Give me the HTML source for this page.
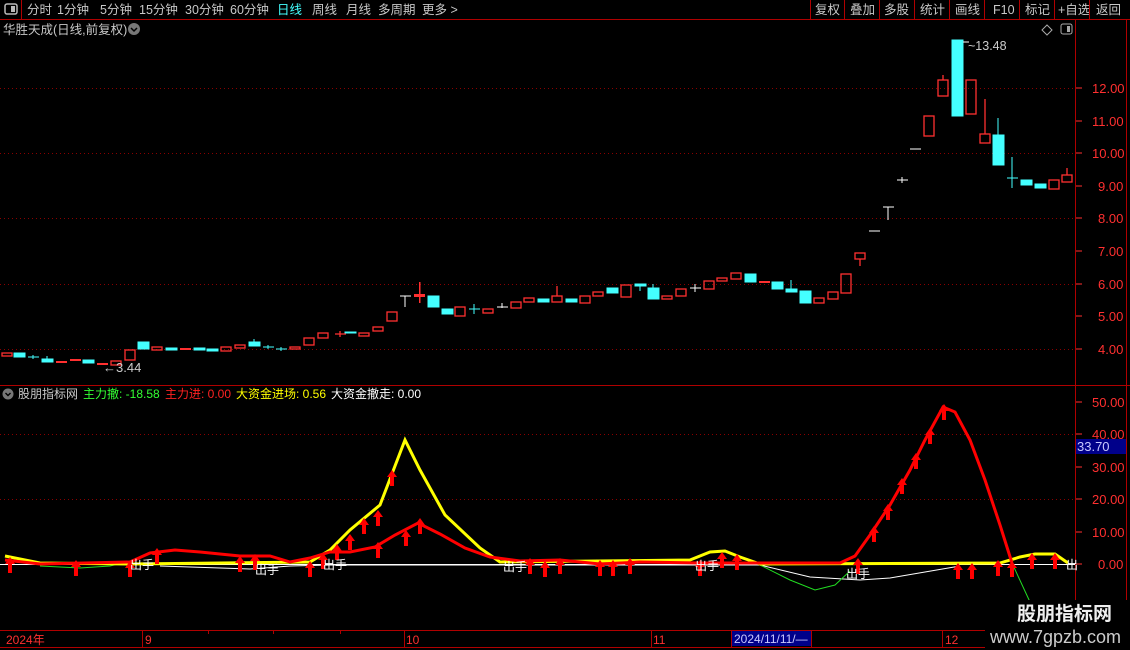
<!DOCTYPE html>
<html><head><meta charset="utf-8"><style>
body{margin:0;background:#000;width:1130px;height:650px;overflow:hidden}
svg{display:block}
text{font-family:"Liberation Sans","Noto Sans CJK SC",sans-serif}
</style></head><body>
<svg width="1130" height="650" viewBox="0 0 1130 650" xmlns="http://www.w3.org/2000/svg">
<rect width="1130" height="650" fill="#000"/>
<!-- toolbar -->
<line x1="0" y1="19.5" x2="1130" y2="19.5" stroke="#b00000"/>
<line x1="21.5" y1="0" x2="21.5" y2="19" stroke="#b00000"/>
<rect x="5" y="4" width="12" height="10" rx="2" fill="none" stroke="#bbb" stroke-width="1.5"/><rect x="11" y="6" width="4" height="6" fill="#bbb"/>
<g font-size="12.5" fill="#c8c8c8">
<text x="27" y="14">分时</text><text x="57" y="14">1分钟</text><text x="100" y="14">5分钟</text><text x="139" y="14">15分钟</text><text x="185" y="14">30分钟</text><text x="230" y="14">60分钟</text>
<text x="277" y="14" fill="#4ff">日线</text><text x="312" y="14">周线</text><text x="346" y="14">月线</text><text x="378" y="14">多周期</text><text x="422" y="14">更多 &gt;</text>
<text x="815" y="14">复权</text><text x="850" y="14">叠加</text><text x="884" y="14">多股</text><text x="920" y="14">统计</text><text x="955" y="14">画线</text><text x="993" y="14">F10</text><text x="1025" y="14">标记</text><text x="1058" y="14">+自选</text><text x="1096" y="14">返回</text>
</g>
<g stroke="#b00000"><line x1="810.5" y1="0" x2="810.5" y2="19"/><line x1="844.5" y1="0" x2="844.5" y2="19"/><line x1="879.5" y1="0" x2="879.5" y2="19"/><line x1="914.5" y1="0" x2="914.5" y2="19"/><line x1="949.5" y1="0" x2="949.5" y2="19"/><line x1="984.5" y1="0" x2="984.5" y2="19"/><line x1="1019.5" y1="0" x2="1019.5" y2="19"/><line x1="1054.5" y1="0" x2="1054.5" y2="19"/><line x1="1089.5" y1="0" x2="1089.5" y2="19"/></g>
<!-- title -->
<text x="3" y="34" font-size="12.5" fill="#c8c8c8">华胜天成(日线,前复权)</text>
<circle cx="134" cy="29" r="6" fill="#777"/><path d="M131 28l3 3 3-3" stroke="#000" stroke-width="1.5" fill="none"/>
<path d="M1047 25l5 5-5 5-5-5z" fill="none" stroke="#aaa"/><rect x="1061" y="24" width="11" height="10" rx="2" fill="none" stroke="#aaa"/><rect x="1067" y="26" width="3" height="6" fill="#aaa"/>
<!-- frame -->
<line x1="1075.5" y1="20" x2="1075.5" y2="630" stroke="#b00000"/>
<line x1="0" y1="385.5" x2="1130" y2="385.5" stroke="#b00000"/>
<line x1="1126.5" y1="20" x2="1126.5" y2="600" stroke="#b00000"/>
<!-- price grid -->
<g stroke="#8a0000" stroke-dasharray="1,3">
<line x1="0" y1="88.5" x2="1075" y2="88.5"/><line x1="0" y1="153.5" x2="1075" y2="153.5"/><line x1="0" y1="218.5" x2="1075" y2="218.5"/><line x1="0" y1="284.5" x2="1075" y2="284.5"/><line x1="0" y1="349.5" x2="1075" y2="349.5"/>
<line x1="0" y1="434.5" x2="1075" y2="434.5"/><line x1="0" y1="499.5" x2="1075" y2="499.5"/>
</g>
<g font-size="13" fill="#ff3030">
<text x="1092" y="93">12.00</text><text x="1092" y="126">11.00</text><text x="1092" y="158">10.00</text><text x="1098" y="191">9.00</text><text x="1098" y="223">8.00</text><text x="1098" y="256">7.00</text><text x="1098" y="289">6.00</text><text x="1098" y="321">5.00</text><text x="1098" y="354">4.00</text>
<text x="1092" y="407">50.00</text><text x="1092" y="439">40.00</text><text x="1092" y="472">30.00</text><text x="1092" y="504">20.00</text><text x="1092" y="537">10.00</text><text x="1098" y="569">0.00</text>
</g>
<g stroke="#ff3030"><path d="M1076 88h6M1076 121h6M1076 153h6M1076 186h6M1076 218h6M1076 251h6M1076 284h6M1076 316h6M1076 349h6M1076 402h6M1076 434h6M1076 467h6M1076 499h6M1076 532h6M1076 564h6"/></g>
<rect x="1076" y="439" width="50" height="15" fill="#00008a"/><text x="1077" y="451" font-size="13" fill="#c8c8ff">33.70</text>
<!-- candles: cyan solid -->
<g fill="#4ff" stroke="#4ff">
<rect x="14" y="353" width="11" height="4"/><rect x="42" y="359" width="11" height="3"/><rect x="83" y="360" width="11" height="3"/><rect x="138" y="342" width="11" height="7"/><rect x="166" y="348" width="11" height="2"/><rect x="194" y="348" width="11" height="2"/><rect x="207" y="349" width="11" height="2"/><rect x="249" y="342" width="11" height="4"/><rect x="345" y="332" width="11" height="1"/>
<rect x="428" y="296" width="11" height="11"/><rect x="442" y="309" width="11" height="5"/><rect x="538" y="299" width="11" height="3"/><rect x="566" y="299" width="11" height="3"/><rect x="607" y="288" width="11" height="5"/><rect x="635" y="284" width="11" height="2"/><rect x="648" y="288" width="11" height="11"/><rect x="745" y="274" width="11" height="8"/><rect x="772" y="282" width="11" height="7"/><rect x="786" y="289" width="11" height="3"/><rect x="800" y="291" width="11" height="12"/>
<rect x="952" y="40" width="11" height="76"/><rect x="993" y="135" width="11" height="30"/><rect x="1021" y="180" width="11" height="5"/><rect x="1035" y="184" width="11" height="4"/>
<path d="M47 356v3M254 339v3M640 286v5M653 284v4M791 280v9M998 118v17M1012 157v31M28 357h11M33 355v4M263 347h11M268 345v4M276 349h11M281 347v4M469 309h11M474 304v10M1007 178h11"/>
</g>
<!-- red hollow -->
<g fill="none" stroke="#ff3030" stroke-width="1.3">
<rect x="2" y="353" width="10" height="3"/><rect x="111" y="361" width="10" height="4"/><rect x="125" y="350" width="10" height="10"/><rect x="152" y="347" width="10" height="3"/><rect x="221" y="347" width="10" height="4"/><rect x="235" y="345" width="10" height="3"/><rect x="290" y="347" width="10" height="2"/><rect x="304" y="338" width="10" height="7"/><rect x="318" y="333" width="10" height="5"/><rect x="359" y="333" width="10" height="3"/><rect x="373" y="327" width="10" height="4"/><rect x="387" y="312" width="10" height="9"/>
<rect x="455" y="307" width="10" height="9"/><rect x="483" y="309" width="10" height="4"/><rect x="511" y="302" width="10" height="6"/><rect x="524" y="298" width="10" height="4"/><rect x="552" y="296" width="10" height="6"/><rect x="580" y="296" width="10" height="7"/><rect x="593" y="292" width="10" height="4"/><rect x="621" y="285" width="10" height="12"/><rect x="662" y="296" width="10" height="3"/><rect x="676" y="289" width="10" height="7"/><rect x="704" y="281" width="10" height="8"/><rect x="717" y="278" width="10" height="3"/><rect x="731" y="273" width="10" height="6"/><rect x="814" y="298" width="10" height="5"/><rect x="828" y="292" width="10" height="7"/><rect x="841" y="274" width="10" height="19"/><rect x="855" y="253" width="10" height="6"/>
<rect x="924" y="116" width="10" height="20"/><rect x="938" y="80" width="10" height="16"/><rect x="966" y="80" width="10" height="34"/><rect x="980" y="134" width="10" height="9"/><rect x="1049" y="180" width="10" height="9"/><rect x="1062" y="175" width="10" height="7"/>
<path d="M557 286v10M860 259v7M943 75v5M985 99v35M1067 168v7M335 334h11M340 331v6"/>
</g>
<g fill="#ff3030"><rect x="56" y="361" width="11" height="2"/><rect x="70" y="359" width="11" height="2"/><rect x="97" y="363" width="11" height="2"/><rect x="180" y="348" width="11" height="2"/><rect x="414" y="294" width="11" height="3"/><rect x="419" y="282" width="1.5" height="21"/><rect x="759" y="281" width="11" height="2"/></g>
<g stroke="#fff" fill="none"><path d="M400 296h11M405 296v11M497 307h11M502 303v5M690 288h11M695 284v8M869 231h11M883 207h11M888 207v13M897 180h11M902 177v6M910 149h11M963 42h6"/></g>
<text x="103" y="372" font-size="13" fill="#ccc">←3.44</text>
<text x="968" y="50" font-size="12.5" fill="#ccc">~13.48</text>
<!-- indicator title -->
<circle cx="8" cy="394" r="5.5" fill="#777"/><path d="M5.5 393l2.5 2.5 2.5-2.5" stroke="#000" stroke-width="1.4" fill="none"/>
<g font-size="12"><text x="18" y="398" fill="#c8c8c8">股朋指标网</text><text x="83" y="398" fill="#3f3">主力撤: -18.58</text><text x="165" y="398" fill="#f22">主力进: 0.00</text><text x="236" y="398" fill="#ff0">大资金进场: 0.56</text><text x="331" y="398" fill="#fff">大资金撤走: 0.00</text></g>
<!-- indicator lines -->
<line x1="0" y1="564.5" x2="1075" y2="564.5" stroke="#fff"/>
<polyline fill="none" stroke="#fff" stroke-width="1" points="160,566 250,569 290,566 330,565 760,565 810,577 860,580 890,578 960,566"/>
<polyline fill="none" stroke="#2d2" stroke-width="1" points="40,566 80,568 110,566 130,561"/>
<polyline fill="none" stroke="#2d2" stroke-width="1" points="760,565 790,580 815,590 835,585 850,571"/>
<polyline fill="none" stroke="#2d2" stroke-width="1" points="1012,563 1030,602"/>
<polyline fill="none" stroke="#ff0" stroke-width="3" points="5,556 40,563 130,564 310,562 330,550 350,530 380,505 405,440 420,470 445,515 480,548 500,562 690,560 710,552 725,551 740,557 760,564 1000,563 1020,557 1035,554 1055,554 1068,563"/>
<polyline fill="none" stroke="#f00" stroke-width="3" points="5,560 40,564 130,562 150,553 175,550 200,552 240,556 270,556 290,562 310,558 330,552 350,552 375,547 395,535 418,523 440,534 465,548 490,557 520,561 560,560 600,564 640,562 700,563 840,563 855,556 870,535 890,505 910,470 925,440 943,407 955,412 970,440 985,480 1000,525 1012,563"/>
<!-- arrows -->
<defs><g id="ar"><path d="M0 -8l-5 7h3v9h4v-9h3z" fill="#f00"/></g></defs>
<g>
<use href="#ar" x="10" y="565"/><use href="#ar" x="76" y="568"/><use href="#ar" x="130" y="569"/><use href="#ar" x="157" y="556"/><use href="#ar" x="240" y="564"/><use href="#ar" x="255" y="562"/><use href="#ar" x="310" y="569"/><use href="#ar" x="323" y="561"/><use href="#ar" x="337" y="552"/><use href="#ar" x="350" y="542"/><use href="#ar" x="364" y="526"/><use href="#ar" x="378" y="518"/><use href="#ar" x="392" y="478"/><use href="#ar" x="406" y="538"/><use href="#ar" x="420" y="526"/><use href="#ar" x="378" y="550"/><use href="#ar" x="530" y="566"/><use href="#ar" x="545" y="569"/><use href="#ar" x="560" y="566"/><use href="#ar" x="600" y="568"/><use href="#ar" x="613" y="568"/><use href="#ar" x="630" y="566"/><use href="#ar" x="700" y="568"/><use href="#ar" x="722" y="560"/><use href="#ar" x="737" y="562"/><use href="#ar" x="858" y="566"/><use href="#ar" x="874" y="534"/><use href="#ar" x="888" y="512"/><use href="#ar" x="902" y="486"/><use href="#ar" x="916" y="461"/><use href="#ar" x="930" y="436"/><use href="#ar" x="944" y="412"/><use href="#ar" x="958" y="571"/><use href="#ar" x="972" y="571"/><use href="#ar" x="998" y="568"/><use href="#ar" x="1012" y="569"/><use href="#ar" x="1032" y="561"/><use href="#ar" x="1055" y="561"/>
</g>
<g font-size="12" fill="#fff"><text x="130" y="569">出手</text><text x="255" y="574">出手</text><text x="323" y="569">出手</text><text x="503" y="571">出手</text><text x="695" y="570">出手</text><text x="846" y="578">出手</text><text x="1066" y="569">出</text></g>
<!-- date axis -->
<line x1="0" y1="630.5" x2="985" y2="630.5" stroke="#b00000"/>
<line x1="0" y1="647.5" x2="985" y2="647.5" stroke="#b00000"/>
<g stroke="#b00000"><path d="M142.5 630v18M208.5 630v4M273.5 630v4M340.5 630v4M404.5 630v18M651.5 630v18M731.5 630v18M811.5 630v18M942.5 630v18"/></g>
<rect x="732" y="631" width="79" height="15" fill="#00008a"/>
<g font-size="12" fill="#ff3030"><text x="6" y="644">2024年</text><text x="145" y="644">9</text><text x="406" y="644">10</text><text x="653" y="644">11</text><text x="945" y="644">12</text></g>
<text x="734" y="643" font-size="12" fill="#c8c8ff">2024/11/11/—</text>
<!-- watermark -->
<rect x="985" y="600" width="145" height="50" fill="#000"/>
<text x="1017" y="620" font-size="19" font-weight="bold" fill="#eee">股朋指标网</text>
<text x="990" y="643" font-size="18" fill="#ccc">www.7gpzb.com</text>
</svg>
</body></html>
